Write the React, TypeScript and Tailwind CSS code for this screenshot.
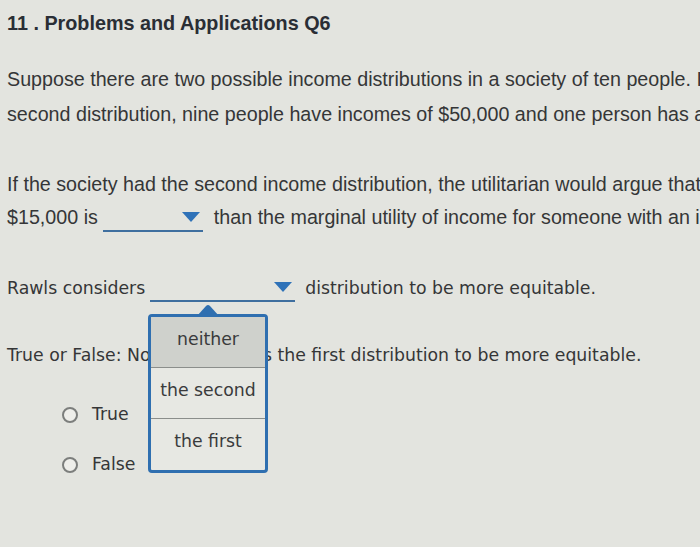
import React from "react";

const sans = { fontFamily: '"Liberation Sans", Arial, sans-serif' };
const verdana = { fontFamily: '"DejaVu Sans", Verdana, sans-serif' };

function Caret() {
  return (
    <svg width="18" height="10" viewBox="0 0 18 10" className="absolute right-[3px] top-[2px]">
      <path d="M0 0 H18 L9 10 Z" fill="#2f72b8" />
    </svg>
  );
}

function Radio({ label }: { label: string }) {
  return (
    <div className="flex items-center h-[33px] pl-[55px] gap-[14px]">
      <span className="w-[16px] h-[16px] rounded-full border-2 border-[#7c7e7c] bg-[#eeeeea]" />
      <span>{label}</span>
    </div>
  );
}

export default function App() {
  const options = ["neither", "the second", "the first"];
  return (
    <div className="w-[700px] h-[547px] overflow-hidden bg-[#e3e4df] text-[#353637] pl-[7px] whitespace-nowrap">
      <div style={sans} className="pt-[12px] h-[34px] leading-[22px] text-[19.8px] font-bold text-[#2a2e35]">
        11 . Problems and Applications Q6
      </div>

      <div style={sans} className="mt-[28px] text-[19.7px] leading-[35px]">
        <div>Suppose there are two possible income distributions in a society of ten people. In the first distribution</div>
        <div>second distribution, nine people have incomes of $50,000 and one person has an income of $10,000.</div>
      </div>

      <div style={sans} className="mt-[36px] text-[19.7px] leading-[33px]">
        <div>If the society had the second income distribution, the utilitarian would argue that the marginal utility</div>
        <div className="flex items-center">
          <span className="shrink-0">$15,000 is</span>
          <span className="shrink-0 relative inline-block w-[100px] h-[22px] ml-[5px] mr-[11px] mt-[6px] border-b-2 border-[#3f6f9f]">
            <Caret />
          </span>
          <span className="shrink-0">than the marginal utility of income for someone with an income of $50,000.</span>
        </div>
      </div>

      <div style={verdana} className="relative mt-[38px] text-[17.3px] leading-[33px] flex items-center">
        <span className="shrink-0">Rawls considers</span>
        <span className="shrink-0 relative inline-block w-[145px] h-[22px] ml-[5px] mr-[10px] mt-[4px] border-b-2 border-[#3f6f9f]">
          <Caret />
        </span>
        <span className="shrink-0">distribution to be more equitable.</span>

        <div className="absolute left-[141px] top-[42px] z-10 w-[120px]">
          <svg width="22" height="11" viewBox="0 0 22 11" className="absolute left-[49px] -top-[9px]">
            <path d="M0 11 L9 1 Q11 -1 13 1 L22 11 Z" fill="#2f6fb0" />
          </svg>
          <div className="border-[3px] border-[#2f6fb0] rounded-[4px] bg-[#e7e8e3] overflow-hidden">
            {options.map((o, i) => (
              <div
                key={o}
                className={
                  "h-[51px] flex items-start justify-center pt-[12px] leading-[20px] text-[#3a3b3c] " +
                  (i === 0 ? "bg-[#cfd1cc] " : "") +
                  (i < options.length - 1 ? "border-b border-[#8b8e8b]" : "")
                }
              >
                {o}
              </div>
            ))}
          </div>
        </div>
      </div>

      <div style={verdana} className="mt-[34px] text-[17.3px] leading-[33px] h-[33px]">
        True or False: Nozick considers the first distribution to be more equitable.
      </div>

      <div style={verdana} className="text-[17.3px] mt-[26px]">
        <Radio label="True" />
        <div className="mt-[17px]">
          <Radio label="False" />
        </div>
      </div>
    </div>
  );
}
